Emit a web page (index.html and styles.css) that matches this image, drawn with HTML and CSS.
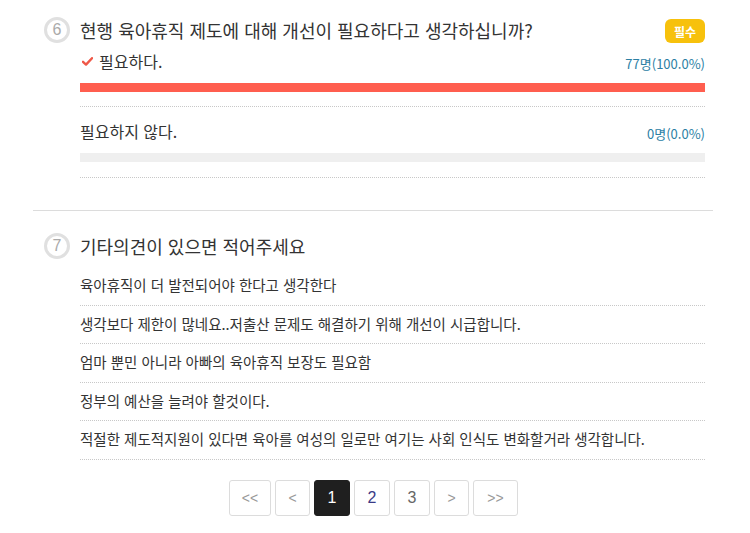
FILE: index.html
```html
<!DOCTYPE html>
<html lang="ko">
<head>
<meta charset="utf-8">
<link rel="stylesheet" href="styles.css">
</head>
<body>
<div class="survey">
  <section class="question q-choice">
    <div class="q-head">
      <span class="q-num">6</span>
      <h2 class="q-title">현행 육아휴직 제도에 대해 개선이 필요하다고 생각하십니까?</h2>
      <span class="badge">필수</span>
    </div>
    <div class="options">
      <div class="option">
        <div class="opt-row">
          <span class="opt-label"><svg class="check" width="11" height="9" viewBox="0 0 11 9"><polyline points="1,4.8 4,7.6 10,1.2" fill="none" stroke="#ef5848" stroke-width="2.4" stroke-linecap="round" stroke-linejoin="round"/></svg>필요하다.</span>
          <span class="opt-count">77명(100.0%)</span>
        </div>
        <div class="bar"><div class="bar-fill" style="width:100%"></div></div>
      </div>
      <div class="option">
        <div class="opt-row">
          <span class="opt-label">필요하지 않다.</span>
          <span class="opt-count">0명(0.0%)</span>
        </div>
        <div class="bar"><div class="bar-fill" style="width:0%"></div></div>
      </div>
    </div>
  </section>
  <section class="question q-text">
    <div class="q-head">
      <span class="q-num">7</span>
      <h2 class="q-title">기타의견이 있으면 적어주세요</h2>
    </div>
    <ul class="comments">
      <li>육아휴직이 더 발전되어야 한다고 생각한다</li>
      <li>생각보다 제한이 많네요..저출산 문제도 해결하기 위해 개선이 시급합니다.</li>
      <li>엄마 뿐민 아니라 아빠의 육아휴직 보장도 필요함</li>
      <li>정부의 예산을 늘려야 할것이다.</li>
      <li>적절한 제도적지원이 있다면 육아를 여성의 일로만 여기는 사회 인식도 변화할거라 생각합니다.</li>
    </ul>
    <nav class="pager">
      <a class="pg pg-first">&lt;&lt;</a>
      <a class="pg pg-prev">&lt;</a>
      <a class="pg pg-num active">1</a>
      <a class="pg pg-num visited">2</a>
      <a class="pg pg-num">3</a>
      <a class="pg pg-next">&gt;</a>
      <a class="pg pg-last">&gt;&gt;</a>
    </nav>
  </section>
</div>
</body>
</html>
```
FILE: styles.css
```css
* { box-sizing: border-box; }
html, body { margin: 0; padding: 0; background: #fff; }
body {
  font-family: "Noto Sans CJK KR", "Noto Sans", sans-serif;
  color: #333;
}
.survey {
  margin-left: 33px;
  width: 680px;
}
.question {
  padding: 16px 8px 32px 47px;
}
.question + .question {
  border-top: 1px solid #dcdcdc;
  padding-top: 21px;
  padding-bottom: 0;
}
.q-head {
  display: flex;
  align-items: center;
  height: 28px;
  margin-left: -36px;
}
.q-num {
  width: 26px;
  height: 26px;
  border: 3px solid #e0e0e0;
  border-radius: 50%;
  display: flex;
  align-items: center;
  justify-content: center;
  font-family: "Liberation Sans", sans-serif;
  font-size: 16px;
  color: #aaa;
  flex: none;
  margin-right: 10px;
}
.q-title {
  margin: 0;
  font-size: 18px;
  font-weight: 400;
  color: #333;
  flex: 1;
  line-height: 28px;
}
.badge {
  width: 40px;
  height: 24px;
  border-radius: 6px;
  background: #f7c10c;
  color: #fff;
  font-size: 12px;
  font-weight: 700;
  display: flex;
  align-items: center;
  justify-content: center;
  margin-top: 2px;
}
.option {
  padding: 12px 0 15px;
  border-bottom: 1px dotted #c8c8c8;
}
.option:first-child {
  padding-top: 5px;
  padding-bottom: 14px;
}
.opt-row {
  display: flex;
  justify-content: space-between;
  align-items: center;
  height: 24px;
}
.opt-label {
  font-size: 16px;
  display: flex;
  align-items: center;
}
.check {
  margin-left: 2px;
  margin-right: 6px;
}
.opt-count {
  font-size: 13px;
  color: #2c80a4;
  margin-top: 4px;
}
.bar {
  margin-top: 10px;
  height: 9px;
  background: #efefef;
}
.bar-fill {
  height: 100%;
  background: #ff5e4f;
}
.comments {
  list-style: none;
  margin: 7px 0 0;
  padding: 0;
}
.comments li {
  font-size: 14.5px;
  line-height: 20px;
  padding: 8px 0 9.5px;
  border-bottom: 1px dotted #c8c8c8;
}
.pager {
  display: flex;
  gap: 4px;
  margin: 20px 0 0;
  padding-left: 149px;
}
.pg {
  height: 36px;
  width: 36px;
  border: 1px solid #dcdcdc;
  border-radius: 3px;
  display: flex;
  align-items: center;
  justify-content: center;
  font-family: "Liberation Sans", sans-serif;
  font-size: 16px;
  color: #666;
  background: #fff;
}
.pg-first { width: 42px; color: #999; font-size: 14px; }
.pg-prev { width: 35px; color: #999; font-size: 14px; }
.pg-next { width: 35px; color: #999; font-size: 14px; }
.pg-last { width: 45px; color: #999; font-size: 14px; }
.pg.active { background: #1f1f1f; border-color: #1f1f1f; color: #fff; }
.pg.visited { color: #3a3a86; }
```
